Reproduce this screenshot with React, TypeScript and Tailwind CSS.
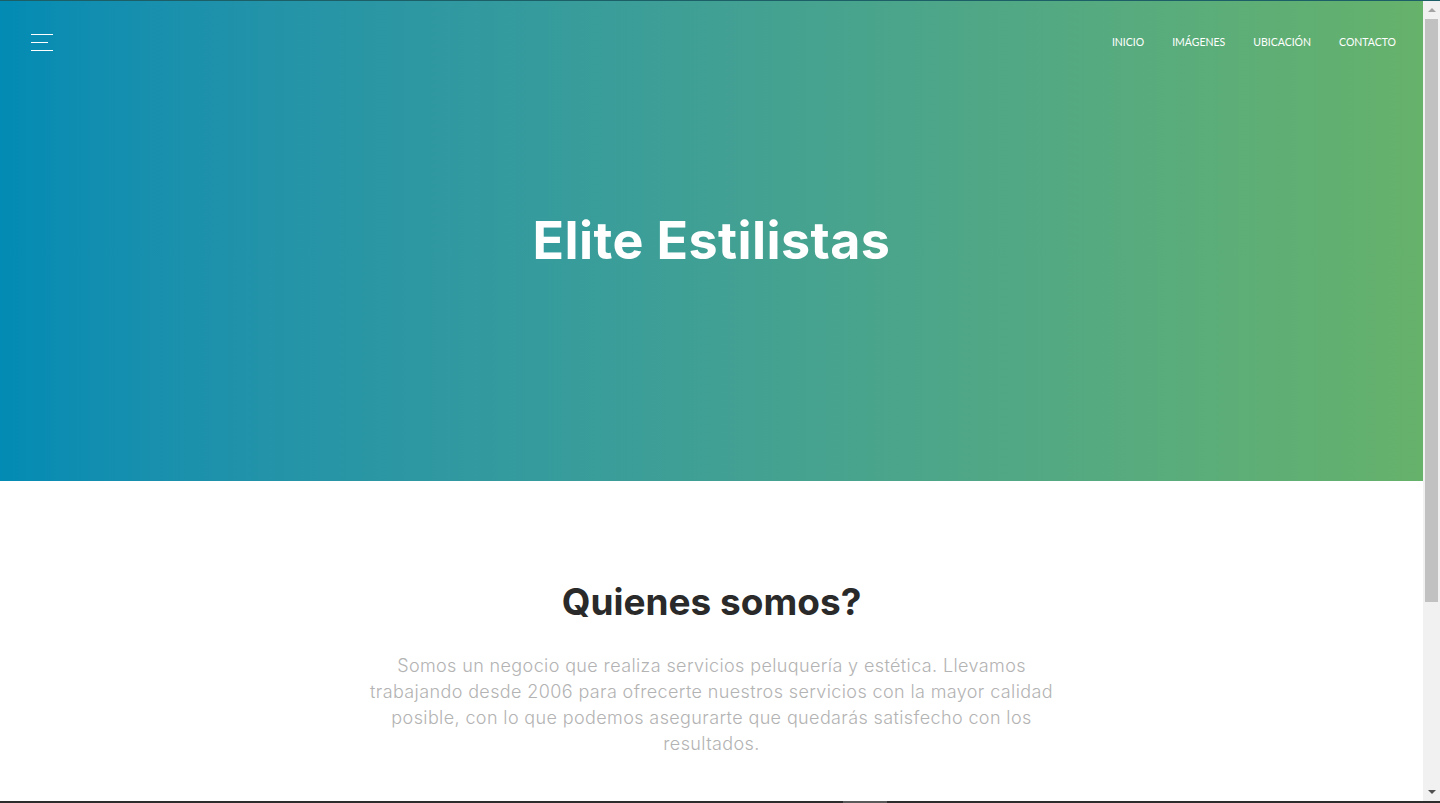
const navLinks = ['Inicio', 'Imágenes', 'Ubicación', 'Contacto'];

export default function App() {
    return (
        <div className="flex h-[803px] flex-col overflow-hidden bg-white">
            <div className="h-px bg-[#1d5f66]" />

            <div className="flex min-h-0 flex-1">
                <main className="flex-1">
                    {/* HERO */}
                    <section className="flex h-[480px] flex-col bg-gradient-to-r from-[#028bb4] to-[#66b26b]">
                        <header className="flex h-[84px] items-center justify-between pr-[27px] pl-[31px]">
                            <button className="-mt-[2px] flex flex-col gap-[7px]">
                                <span className="block h-px w-[22px] bg-white" />
                                <span className="block h-px w-[17px] bg-white" />
                                <span className="block h-px w-[22px] bg-white" />
                            </button>

                            <nav className="flex gap-[28px] font-['Lato',sans-serif] text-[10.5px] text-white uppercase">
                                {navLinks.map((link) => (
                                    <a key={link} href="#">
                                        {link}
                                    </a>
                                ))}
                            </nav>
                        </header>

                        <h1 className="mt-[130px] text-center font-['Inter',sans-serif] text-[52px] leading-none font-bold tracking-[0.4px] text-white">
                            Elite Estilistas
                        </h1>
                    </section>

                    {/* QUIENES SOMOS */}
                    <section className="flex flex-col items-center pt-[102px]">
                        <h2 className="font-['Inter',sans-serif] text-[37px] leading-none font-bold text-[#2a2a2a]">
                            Quienes somos?
                        </h2>
                        <p className="mt-[33px] max-w-[698px] text-center font-['Inter',sans-serif] text-[18px] leading-[26px] font-light tracking-[0.38px] text-[#b3b3b3]">
                            Somos un negocio que realiza servicios peluquería y estética. Llevamos trabajando desde 2006
                            para ofrecerte nuestros servicios con la mayor calidad posible, con lo que podemos asegurarte
                            que quedarás satisfecho con los resultados.
                        </p>
                    </section>
                </main>

                {/* scrollbar */}
                <div className="flex w-[17px] flex-col items-center bg-[#f1f1f1]">
                    <div className="mt-[7px] h-0 w-0 border-x-[4px] border-b-[4px] border-x-transparent border-b-[#a3a3a3]" />
                    <div className="mt-[7px] h-[583px] w-[13px] bg-[#c1c1c1]" />
                    <div className="mt-auto mb-[7px] h-0 w-0 border-x-[4px] border-t-[4px] border-x-transparent border-t-[#505050]" />
                </div>
            </div>

            <div className="flex h-[2px] bg-[#2d2d2d]">
                <div className="ml-[843px] w-[44px] bg-[#5a5a5a]" />
            </div>
        </div>
    );
}
